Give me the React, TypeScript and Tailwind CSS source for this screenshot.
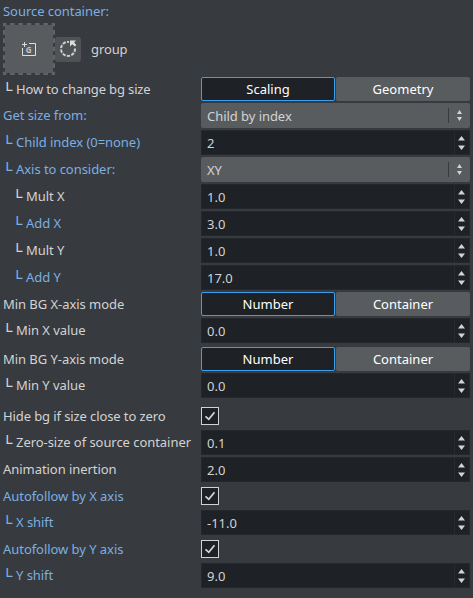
import React from 'react';

const Branch = () => (
  <span className="relative top-px inline-block w-[13px] shrink-0 origin-left scale-x-120 font-['DejaVu_Sans_Mono',monospace] text-[14px] leading-none -left-px">└</span>
);

function Label({ text, blue, level = 0, tracking = 'tracking-[-0.05px]' }: { text: string; blue?: boolean; level?: number; tracking?: string }) {
  const indent = level === 2 ? 'pl-[13px]' : 'pl-[3px]';
  return (
    <div className={`flex max-h-6 w-[201px] shrink-0 items-center whitespace-pre ${indent} ${blue ? 'text-[#7ab0e2]' : 'text-[#d3d3d3]'}`}>
      {level > 0 && <Branch />}
      <span className={tracking}>{text}</span>
    </div>
  );
}

function Row({ top, label, blue, level, tracking, children }: { top: string; label: string; blue?: boolean; level?: number; tracking?: string; children: React.ReactNode }) {
  return (
    <div className={`flex ${top}`}>
      <Label text={label} blue={blue} level={level} tracking={tracking} />
      {children}
    </div>
  );
}

function Segments({ a, b }: { a: string; b: string }) {
  return (
    <div className="flex h-6 w-[269px] gap-px text-white">
      <div className="flex w-[134px] items-center justify-center rounded-[2px] border border-[#3b9ff0] bg-[#1e2125]">{a}</div>
      <div className="flex w-[134px] items-center justify-center rounded-[2px] bg-[#585c5f]">{b}</div>
    </div>
  );
}

function Select({ value }: { value: string }) {
  return (
    <div className="flex h-[25px] w-[269px] items-center rounded-[2px] bg-[#585c5f] pl-1.5 text-[#d3d3d3]">
      <span className="flex-1 tracking-[-0.05px]">{value}</span>
      <span className="h-[15px] w-px bg-[#373b3f]" />
      <svg className="ml-2 mr-2" width="5" height="11" viewBox="0 0 5 11" fill="#d3d3d3">
        <path d="M2.5 0 5 4H0ZM0 7h5L2.5 11Z" />
      </svg>
    </div>
  );
}

function NumberField({ value }: { value: string }) {
  return (
    <div className="flex h-[25px] w-[269px] items-center border border-[#24282c] bg-[#1e2125] pl-[5px] text-[#d3d3d3]">
      <span className="flex-1">{value}</span>
      <span className="h-full w-px bg-[#272b2f]" />
      <svg className="ml-[3px] mr-1" width="7" height="14" viewBox="0 0 7 14" fill="#d3d3d3">
        <path d="M3.5 0 7 4.5H0ZM0 9.5h7L3.5 14Z" />
      </svg>
    </div>
  );
}

function Check() {
  return (
    <div className="h-[18px] w-[18px] border border-[#d3d3d3] bg-[#1e2125]">
      <svg width="16" height="16" viewBox="0 0 16 16" fill="none" stroke="#d3d3d3" strokeWidth="1.8">
        <path d="M3.5 8.3 6.8 11.3 12.5 4.3" />
      </svg>
    </div>
  );
}

export default function App() {
  return (
    <div className="h-[598px] w-[473px] overflow-hidden bg-[#373a3f] font-['Noto_Sans',sans-serif] text-[13px] leading-[18px]">
      <div className="h-[23px] pl-[3px] pt-[2px] tracking-[-0.05px] text-[#7ab0e2]">Source container:</div>
      <div className="flex h-[52px] items-center pl-[3px]">
        <svg width="52" height="52" viewBox="0 0 52 52" fill="none">
          <rect x="1" y="1" width="50" height="50" rx="3" fill="#585c5f" />
          <rect x="1" y="1" width="50" height="50" stroke="#373a3f" strokeWidth="2" />
          <rect x="1" y="1" width="50" height="50" stroke="#606466" strokeWidth="2" strokeDasharray="4.6 3.733" strokeDashoffset="2.3" />
          <path d="M26 20.5H32.500V32.500H19.500V25M21.500 19v5M19 21.500h5" stroke="#dedede" />
          <text x="22.800" y="30" fill="#c6c6c6" fontFamily="Noto Sans" fontWeight="700" fontSize="8">G</text>
        </svg>
        <div className="flex h-[25px] w-[26px] items-center justify-center rounded-[3px] bg-[#505356]">
          <svg width="18" height="18" viewBox="0 0 18 18" fill="none">
            <path d="M16 8.500A7 7 0 1 1 10 2" stroke="#cecece" strokeWidth="2" strokeDasharray="3.300 1.300" />
            <path d="M11 .5h6l-2 2 2.300 2.500-1.500 1.500-2.500-2.300-2.300 2.300Z" fill="#dedede" />
          </svg>
        </div>
        <span className="ml-[10px] tracking-[-0.1px] text-[#d3d3d3]">group</span>
      </div>
      <Row top="mt-0.5" label="How to change bg size" level={1} tracking="tracking-[-0.14px]"><Segments a="Scaling" b="Geometry" /></Row>
      <Row top="mt-0.5" label="Get size from:" blue><Select value="Child by index" /></Row>
      <Row top="mt-0.5" label="Child index (0=none)" blue level={1}><NumberField value="2" /></Row>
      <Row top="mt-0.5" label="Axis to consider:" blue level={1}><Select value="XY" /></Row>
      <Row top="mt-0.5" label="Mult X" level={2}><NumberField value="1.0" /></Row>
      <Row top="mt-0.5" label="Add X" blue level={2}><NumberField value="3.0" /></Row>
      <Row top="mt-0.5" label="Mult Y" level={2}><NumberField value="1.0" /></Row>
      <Row top="mt-0.5" label="Add Y" blue level={2}><NumberField value="17.0" /></Row>
      <Row top="mt-0.5" label="Min BG X-axis mode"><Segments a="Number" b="Container" /></Row>
      <Row top="mt-0.5" label="Min X value" level={1}><NumberField value="0.0" /></Row>
      <Row top="mt-1" label="Min BG Y-axis mode"><Segments a="Number" b="Container" /></Row>
      <Row top="mt-0.5" label="Min Y value" level={1}><NumberField value="0.0" /></Row>
      <Row top="mt-[9px]" label="Hide bg if size close to zero" tracking="tracking-[-0.1px]"><Check /></Row>
      <Row top="mt-[5px]" label="Zero-size of source container" level={1}><NumberField value="0.1" /></Row>
      <Row top="mt-0.5" label="Animation inertion"><NumberField value="2.0" /></Row>
      <Row top="mt-[5px]" label="Autofollow by X axis" blue><Check /></Row>
      <Row top="mt-[5px]" label="X shift" blue level={1}><NumberField value="-11.0" /></Row>
      <Row top="mt-[5px]" label="Autofollow by Y axis" blue><Check /></Row>
      <Row top="mt-[5px]" label="Y shift" blue level={1}><NumberField value="9.0" /></Row>
    </div>
  );
}
